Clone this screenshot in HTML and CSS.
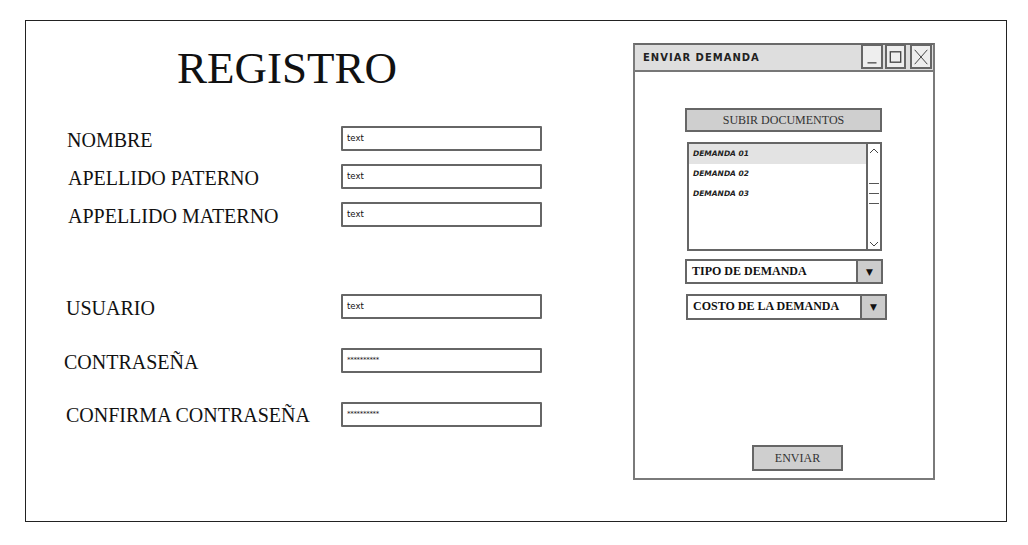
FILE: index.html
```html
<!DOCTYPE html>
<html lang="es">
<head>
<meta charset="utf-8">
<title>Registro</title>
<link rel="stylesheet" href="styles.css">
</head>
<body>
<div class="frame">
  <section class="registro">
    <h1 class="title">REGISTRO</h1>
    <div class="form">
      <div class="row r1"><span class="label l1">NOMBRE</span><div class="input">text</div></div>
      <div class="row r2"><span class="label l2">APELLIDO PATERNO</span><div class="input">text</div></div>
      <div class="row r3"><span class="label l3">APPELLIDO MATERNO</span><div class="input">text</div></div>
      <div class="row r4"><span class="label l4">USUARIO</span><div class="input">text</div></div>
      <div class="row r5"><span class="label l5">CONTRASEÑA</span><div class="input pw">**********</div></div>
      <div class="row r6"><span class="label l6">CONFIRMA CONTRASEÑA</span><div class="input pw">**********</div></div>
    </div>
  </section>

  <section class="window">
    <header class="titlebar">
      <span class="wtitle">ENVIAR DEMANDA</span>
      <div class="ctrls">
        <span class="ctrl min"><svg width="20" height="22" viewBox="0 0 20 22"><path d="M5 17.5H15" stroke="#444" stroke-width="1.4" fill="none"/></svg></span>
        <span class="ctrl max"><svg width="18" height="22" viewBox="0 0 18 22"><rect x="3.5" y="5.5" width="11" height="11" stroke="#444" stroke-width="1.4" fill="none"/></svg></span>
        <span class="ctrl close"><svg width="20" height="22" viewBox="0 0 20 22"><path d="M3 3L17 19M17 3L3 19" stroke="#444" stroke-width="1.1" fill="none"/></svg></span>
      </div>
    </header>
    <div class="wbody">
      <div class="btn upload">SUBIR DOCUMENTOS</div>
      <div class="listbox">
        <ul class="items">
          <li class="item sel">DEMANDA 01</li>
          <li class="item">DEMANDA 02</li>
          <li class="item">DEMANDA 03</li>
        </ul>
        <div class="scroll">
          <svg class="arr" width="12" height="10" viewBox="0 0 12 10"><path d="M2 7L6 3L10 7" stroke="#444" stroke-width="1" fill="none"/></svg>
          <div class="thumb"><span></span><span></span><span></span></div>
          <svg class="arr" width="12" height="10" viewBox="0 0 12 10"><path d="M2 3L6 7L10 3" stroke="#444" stroke-width="1" fill="none"/></svg>
        </div>
      </div>
      <div class="select s1"><span class="sval">TIPO DE DEMANDA</span><span class="sarrow">▼</span></div>
      <div class="select s2"><span class="sval">COSTO DE LA DEMANDA</span><span class="sarrow">▼</span></div>
      <div class="btn send">ENVIAR</div>
    </div>
  </section>
</div>
</body>
</html>
```

FILE: styles.css
```css
* { box-sizing: border-box; }
html, body { margin: 0; padding: 0; background: #fff; }
body { font-family: "Liberation Serif", "Times New Roman", serif; color: #111; }

.frame {
  margin: 20px 0 0 25px;
  width: 982px;
  height: 502px;
  border: 1px solid #222;
  display: flex;
  align-items: flex-start;
}

.registro { width: 607px; flex: none; }

.title {
  margin: 0;
  padding: 25px 0 0 151px;
  font-weight: normal;
  font-size: 45px;
  line-height: 45px;
  color: #111;
}

.form { display: flex; flex-direction: column; margin-top: 35px; }
.row { display: flex; align-items: flex-start; height: 25px; }
.r2, .r3 { margin-top: 13px; }
.r4 { margin-top: 67px; }
.r5, .r6 { margin-top: 29px; }

.label {
  width: 315px;
  font-size: 20px;
  line-height: 25px;
  padding-top: 2px;
  color: #111;
  white-space: nowrap;
}
.l1 { padding-left: 41px; }
.l2, .l3 { padding-left: 42px; }
.l4 { padding-left: 40px; }
.l5 { padding-left: 38px; }
.l6 { padding-left: 40px; padding-top: 1px; }

.input {
  width: 201px;
  height: 25px;
  border: 2px solid #666;
  border-radius: 1px;
  padding-left: 4px;
  font-family: "DejaVu Sans", sans-serif;
  font-size: 8.5px;
  line-height: 21px;
  color: #111;
}
.input.pw { font-size: 7px; letter-spacing: -0.3px; line-height: 20px; }

/* window */
.window {
  width: 302px;
  height: 437px;
  margin-top: 22px;
  border: 2px solid #7a7a7a;
  border-top-color: #6a6a6a;
  display: flex;
  flex-direction: column;
  flex: none;
}

.titlebar {
  height: 27px;
  background: #dedede;
  border-bottom: 2px solid #777;
  display: flex;
  align-items: flex-start;
  justify-content: space-between;
  padding: 0 1px 0 8px;
  flex: none;
}
.wtitle {
  font-family: "DejaVu Sans", sans-serif;
  font-size: 10px;
  font-weight: bold;
  letter-spacing: 1px;
  line-height: 25px;
  color: #222;
}
.ctrls { display: flex; gap: 2px; margin-top: -1px; }
.ctrl {
  display: flex;
  align-items: center;
  justify-content: center;
  height: 25px;
  border: 2px solid #666;
  background: #eee;
}
.ctrl.min { width: 22px; }
.ctrl.max { width: 21px; margin-right: 2px; }
.ctrl.close { width: 22px; }

.wbody {
  display: flex;
  flex-direction: column;
  align-items: flex-start;
  flex: 1;
}

.btn {
  background: #cfcfcf;
  border: 2px solid #666;
  font-size: 12px;
  color: #333;
  display: flex;
  align-items: center;
  justify-content: center;
}
.upload { width: 197px; height: 24px; margin: 36px 0 0 50px; padding-top: 1px; }

.listbox {
  width: 195px;
  height: 109px;
  margin: 10px 0 0 52px;
  border: 2px solid #666;
  display: flex;
}
.items { list-style: none; margin: 0; padding: 0; flex: 1; }
.item {
  height: 20px;
  line-height: 20px;
  padding-left: 4px;
  font-family: "DejaVu Sans", sans-serif;
  font-style: italic;
  font-size: 7.5px;
  font-weight: bold;
  color: #222;
}
.item.sel { background: #e3e3e3; }

.scroll {
  width: 14px;
  border-left: 2px solid #666;
  display: flex;
  flex-direction: column;
  align-items: center;
  justify-content: space-between;
  padding: 2px 0 0;
}
.thumb {
  display: flex;
  flex-direction: column;
  gap: 9px;
  width: 10px;
  margin-top: 20px;
  margin-bottom: 28px;
}
.thumb span { display: block; height: 1px; background: #555; }

.select {
  height: 25px;
  border: 2px solid #666;
  display: flex;
  background: #fff;
}
.s1 { width: 198px; margin: 8px 0 0 50px; }
.s2 { width: 201px; height: 26px; margin: 10px 0 0 51px; }
.sval {
  flex: 1;
  font-weight: bold;
  font-size: 12px;
  line-height: 21px;
  padding-left: 5px;
  color: #111;
}
.sarrow {
  width: 25px;
  background: #cccccc;
  border-left: 2px solid #666;
  font-size: 9px;
  display: flex;
  align-items: center;
  justify-content: center;
  font-family: "DejaVu Sans", sans-serif;
  color: #111;
}

.send { width: 91px; height: 26px; margin: 125px 0 0 117px; }
```
